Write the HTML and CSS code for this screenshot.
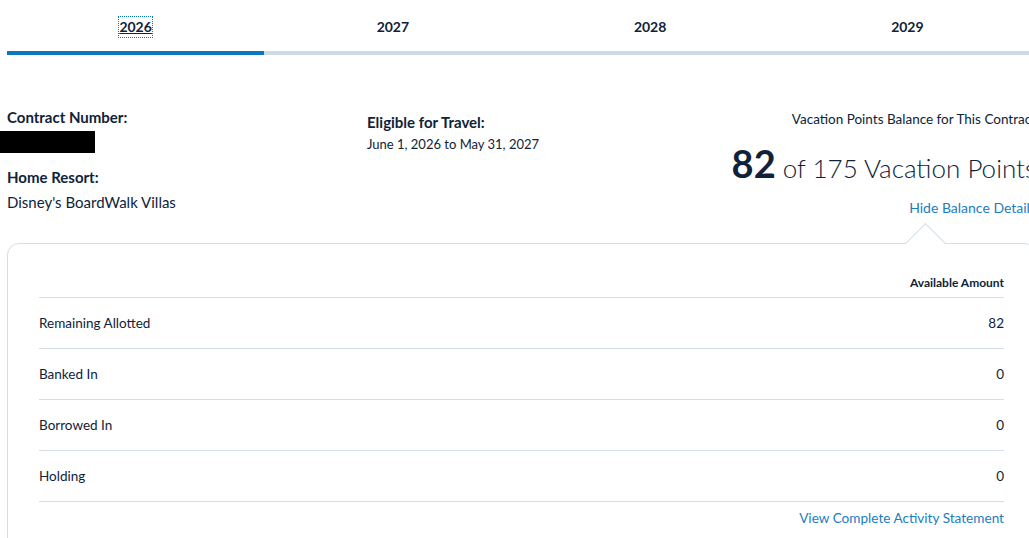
FILE: index.html
```html
<!DOCTYPE html>
<html lang="en">
<head>
	<meta charset="UTF-8">
	<title>Vacation Points</title>
	<link rel="stylesheet" href="styles.css">
</head>
<body>

<div class="page">

	<!-- use year tabs -->
	<nav class="year-tabs">
		<a class="year-tab active" href="#"><span class="year-label">2026</span></a>
		<a class="year-tab" href="#"><span class="year-label">2027</span></a>
		<a class="year-tab" href="#"><span class="year-label">2028</span></a>
		<a class="year-tab" href="#"><span class="year-label">2029</span></a>
	</nav>

	<section class="contract-info">
		<div class="info-col">
			<h3 class="info-title">Contract Number:</h3>
			<span class="redacted"></span>
			<h3 class="info-title home-resort">Home Resort:</h3>
			<p class="info-text">Disney's BoardWalk Villas</p>
		</div>

		<div class="info-col travel-col">
			<h3 class="info-title">Eligible for Travel:</h3>
			<p class="info-text small">June 1, 2026 to May 31, 2027</p>
		</div>

		<div class="info-col balance-col">
			<p class="balance-caption">Vacation Points Balance for This Contract</p>
			<p class="balance-total"><strong>82</strong> of 175 Vacation Points</p>
			<a class="balance-toggle" href="#">Hide Balance Details</a>
		</div>
	</section>

	<section class="balance-card">
		<span class="card-notch"></span>
		<table class="balance-table">
			<thead>
				<tr>
					<th></th>
					<th class="amount">Available Amount</th>
				</tr>
			</thead>
			<tbody>
				<tr><td>Remaining Allotted</td><td class="amount">82</td></tr>
				<tr><td>Banked In</td><td class="amount">0</td></tr>
				<tr><td>Borrowed In</td><td class="amount">0</td></tr>
				<tr><td>Holding</td><td class="amount">0</td></tr>
			</tbody>
		</table>
		<div class="statement-link">
			<a href="#">View Complete Activity Statement</a>
		</div>
	</section>

</div>

</body>
</html>
```

FILE: styles.css
```css
:root {
	--navy: #0e2339;
	--link-blue: #1c7dc2;
	--tab-blue: #0a78be;
	--line: #d3dee7;
	--page-width: 1029px;
}

html, body {
	margin: 0;
	overflow-x: hidden;
	background: #fff;
}

body {
	font-family: Lato, "Open Sans", sans-serif;
	color: var(--navy);
}

.page {
	width: var(--page-width);
	margin-left: 7px;
}

/* year tabs */
.year-tabs {
	display: grid;
	grid-template-columns: repeat(4, 1fr);
}

.year-tab {
	display: flex;
	justify-content: center;
	padding: 17px 0 14px;
	border-bottom: 4px solid #d0dce5;
	color: var(--navy);
	text-decoration: none;
	font-weight: 700;
	font-size: 14px;
	line-height: 20px;
}

.year-tab.active {
	border-bottom-color: var(--tab-blue);
}

.year-tab.active .year-label {
	text-decoration: underline;
	outline: 1px dotted var(--tab-blue);
	outline-offset: 0;
}

/* contract info */
.contract-info {
	display: grid;
	grid-template-columns: 360px 1fr auto;
	padding-top: 52px;
}

.info-title {
	margin: 0;
	font-size: 15px;
	line-height: 20px;
	font-weight: 700;
}

.info-text {
	margin: 5px 0 0;
	font-size: 15px;
	line-height: 20px;
}

.info-text.small {
	margin-top: 3px;
	font-size: 13px;
	line-height: 18px;
}

.redacted {
	display: block;
	width: 95px;
	height: 22px;
	margin: 4px 0 0 -7px;
	background: #000;
}

.home-resort {
	margin-top: 14px;
}

.travel-col {
	padding-top: 5px;
}

.balance-col {
	display: flex;
	flex-direction: column;
	align-items: flex-end;
	padding-top: 3px;
}

.balance-caption {
	margin: 0;
	font-size: 13.5px;
	line-height: 18px;
}

.balance-total {
	margin: 13px 0 0;
	font-size: 26px;
	font-weight: 300;
	line-height: 44px;
	white-space: nowrap;
}

.balance-total strong {
	font-size: 38px;
	font-weight: 700;
}

.balance-toggle {
	margin-top: 8px;
	color: var(--link-blue);
	text-decoration: none;
	font-size: 14px;
	line-height: 20px;
}

/* balance details card */
.balance-card {
	position: relative;
	margin-top: 25px;
	padding: 31px 31px 30px;
	border: 1px solid var(--line);
	border-radius: 12px;
}

.card-notch {
	position: absolute;
	top: -15px;
	right: 95px;
	width: 28px;
	height: 28px;
	background: #fff;
	border-top: 1px solid var(--line);
	border-left: 1px solid var(--line);
	transform: rotate(45deg);
}

.balance-table {
	width: 100%;
	border-collapse: collapse;
	font-size: 13.5px;
}

.balance-table th {
	padding: 0 0 6px;
	font-size: 12px;
	line-height: 16px;
	font-weight: 700;
	border-bottom: 1px solid var(--line);
}

.balance-table td {
	height: 50px;
	padding: 0;
	border-bottom: 1px solid var(--line);
	line-height: 16px;
}

.amount {
	text-align: right;
}

.statement-link {
	margin-top: 8px;
	text-align: right;
	font-size: 13.6px;
	line-height: 16px;
}

.statement-link a {
	color: var(--link-blue);
	text-decoration: none;
}
```
